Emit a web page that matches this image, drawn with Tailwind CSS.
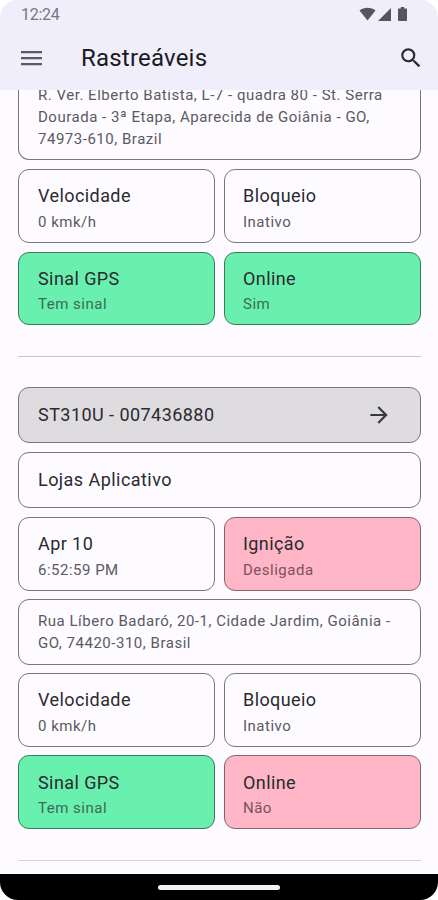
<!DOCTYPE html>
<html lang="pt-BR">
<head>
  <meta charset="UTF-8" />
  <meta name="viewport" content="width=device-width, initial-scale=1.0" />
  <title>Rastreáveis</title>
  <script src="https://cdn.jsdelivr.net/npm/@tailwindcss/browser@4"></script>
</head>
<body class="bg-white font-['Roboto',sans-serif]">
  <div class="w-[438px] h-[900px] flex flex-col overflow-hidden rounded-[18px] bg-[#fdfbff] text-[#2a2a2e]">
    <!-- Status bar + app bar -->
    <header class="h-[90px] shrink-0 bg-[#efeefa]">
      <div class="h-[28px] flex items-center justify-between pl-[21px] pr-[30px]">
        <span class="text-[16px] leading-[28px] tracking-[-0.3px] pt-[2px] text-[#77777f]">12:24</span>
        <div class="flex items-center">
          <svg class="w-[17px] h-[14px]" viewBox="0 0 17 14" fill="#55555c"><path d="M8.500 13.500L.500 3.500C5 -.3 12 -.3 16.500 3.500z" /></svg>
          <svg class="w-[13px] h-[13px] ml-[2px]" viewBox="0 0 13 13" fill="#55555c"><path d="M13 0v13H0z" /></svg>
          <svg class="w-[9px] h-[14px] ml-[7px] mr-[1px]" viewBox="0 0 9 14" fill="#55555c"><path d="M2.800 0h3.400v1.500H8c.6 0 1 .4 1 1V13c0 .6-.4 1-1 1H1c-.6 0-1-.4-1-1V2.500c0-.6.4-1 1-1h1.800z" /></svg>
        </div>
      </div>
      <div class="h-[60px] flex items-center pl-[21px] pr-[15px]">
        <svg class="w-[21px] h-[16px]" viewBox="0 0 21 16" fill="#5a5a63"><path d="M0 1h21v2.200H0zM0 7h21v2.200H0zM0 13h21v2.200H0z" /></svg>
        <h1 class="ml-[39px] text-[24px] leading-[30px] tracking-[0.2px] text-[#1b1b1f]">Rastreáveis</h1>
        <svg class="w-[26px] h-[26px] ml-auto -mr-[1px]" viewBox="0 0 24 24" fill="#2a2a2e"><path d="M15.500 14h-.79l-.28-.27A6.471 6.471 0 0 0 16 9.500 6.500 6.500 0 1 0 9.500 16c1.610 0 3.090-.59 4.230-1.570l.27.28v.79l5 4.990L20.490 19l-4.990-5zm-6 0C7.010 14 5 11.990 5 9.500S7.010 5 9.500 5 14 7.010 14 9.500 11.990 14 9.500 14z" /></svg>
      </div>
    </header>

    <main class="flex-1 min-h-0 overflow-hidden pl-[18px] pr-[17px]">
      <!-- First tracker, scrolled under the app bar -->
      <div class="h-[70px] flex flex-col justify-end border border-t-0 border-[#77777b] rounded-b-[11px] px-[19px] pb-[9px] text-[15px] leading-[22px] tracking-[0.52px] text-[#5a5a5f]">
        <p class="whitespace-nowrap">R. Ver. Elberto Batista, L-7 - quadra 80 - St. Serra<br />Dourada - 3ª Etapa, Aparecida de Goiânia - GO,<br />74973-610, Brazil</p>
      </div>
      <div class="mt-[9px] grid grid-cols-2 gap-[9px]">
        <div class="h-[74px] border border-[#77777b] rounded-[11px] pl-[19px] pt-[13px]">
          <p class="text-[18px] leading-[26px] tracking-[0.42px]">Velocidade</p>
          <p class="text-[15px] leading-[26px] tracking-[0.5px] text-[#5a5a5f]">0 kmk/h</p>
        </div>
        <div class="h-[74px] border border-[#77777b] rounded-[11px] pl-[18px] pt-[13px]">
          <p class="text-[18px] leading-[26px] tracking-[0.42px]">Bloqueio</p>
          <p class="text-[15px] leading-[26px] tracking-[0.5px] text-[#5a5a5f]">Inativo</p>
        </div>
        <div class="h-[73px] bg-[#69f0ae] border border-[#3c7a5d] rounded-[11px] pl-[19px] pt-[13px]">
          <p class="text-[18px] leading-[26px] tracking-[0.42px]">Sinal GPS</p>
          <p class="text-[15px] leading-[24px] tracking-[0.5px] text-[#3b6b57]">Tem sinal</p>
        </div>
        <div class="h-[73px] bg-[#69f0ae] border border-[#3c7a5d] rounded-[11px] pl-[18px] pt-[13px]">
          <p class="text-[18px] leading-[26px] tracking-[0.42px]">Online</p>
          <p class="text-[15px] leading-[24px] tracking-[0.5px] text-[#3b6b57]">Sim</p>
        </div>
      </div>

      <hr class="mt-[31px] border-[#c8c6ca]" />

      <!-- Second tracker -->
      <div class="mt-[30px] flex flex-col gap-[9px]">
        <div class="h-[56px] flex items-center justify-between bg-[#dfdce0] border border-[#77777b] rounded-[11px] pl-[19px] pr-[28px]">
          <p class="text-[18px] leading-[26px] tracking-[0.45px]">ST310U - 007436880</p>
          <svg class="w-[26px] h-[26px]" viewBox="0 0 24 24" fill="#39393e"><path d="M12 4l-1.410 1.410L16.170 11H4v2h12.170l-5.580 5.590L12 20l8-8z" /></svg>
        </div>
        <div class="h-[56px] flex items-center border border-[#77777b] rounded-[11px] pl-[19px]">
          <p class="text-[18px] leading-[26px] tracking-[0.45px]">Lojas Aplicativo</p>
        </div>
        <div class="grid grid-cols-2 gap-[9px]">
          <div class="h-[74px] border border-[#77777b] rounded-[11px] pl-[19px] pt-[13px]">
            <p class="text-[18px] leading-[26px] tracking-[0.42px]">Apr 10</p>
            <p class="text-[15px] leading-[26px] tracking-[0.5px] text-[#5a5a5f]">6:52:59 PM</p>
          </div>
          <div class="h-[74px] bg-[#ffb6c6] border border-[#85636c] rounded-[11px] pl-[18px] pt-[13px]">
            <p class="text-[18px] leading-[26px] tracking-[0.42px]">Ignição</p>
            <p class="text-[15px] leading-[26px] tracking-[0.5px] text-[#7a525d]">Desligada</p>
          </div>
        </div>
        <div class="-mt-px h-[66px] border border-[#77777b] rounded-[11px] px-[19px] pt-[10px] text-[15px] leading-[22px] tracking-[0.52px] text-[#5a5a5f]">
          <p class="whitespace-nowrap">Rua Líbero Badaró, 20-1, Cidade Jardim, Goiânia -<br />GO, 74420-310, Brasil</p>
        </div>
        <div class="-mt-px grid grid-cols-2 gap-x-[9px] gap-y-[8px]">
          <div class="h-[74px] border border-[#77777b] rounded-[11px] pl-[19px] pt-[13px]">
            <p class="text-[18px] leading-[26px] tracking-[0.42px]">Velocidade</p>
            <p class="text-[15px] leading-[26px] tracking-[0.5px] text-[#5a5a5f]">0 kmk/h</p>
          </div>
          <div class="h-[74px] border border-[#77777b] rounded-[11px] pl-[18px] pt-[13px]">
            <p class="text-[18px] leading-[26px] tracking-[0.42px]">Bloqueio</p>
            <p class="text-[15px] leading-[26px] tracking-[0.5px] text-[#5a5a5f]">Inativo</p>
          </div>
          <div class="h-[74px] bg-[#69f0ae] border border-[#3c7a5d] rounded-[11px] pl-[19px] pt-[14px]">
            <p class="text-[18px] leading-[26px] tracking-[0.42px]">Sinal GPS</p>
            <p class="text-[15px] leading-[24px] tracking-[0.5px] text-[#3b6b57]">Tem sinal</p>
          </div>
          <div class="h-[74px] bg-[#ffb6c6] border border-[#85636c] rounded-[11px] pl-[18px] pt-[14px]">
            <p class="text-[18px] leading-[26px] tracking-[0.42px]">Online</p>
            <p class="text-[15px] leading-[24px] tracking-[0.5px] text-[#7a525d]">Não</p>
          </div>
        </div>
      </div>

      <hr class="mt-[31px] border-[#d6d4d9]" />
    </main>

    <!-- Gesture bar -->
    <footer class="h-[26px] shrink-0 flex justify-center bg-black pt-[11px]">
      <div class="w-[122px] h-[5px] rounded-full bg-[#f2f2f2]"></div>
    </footer>
  </div>
</body>
</html>
